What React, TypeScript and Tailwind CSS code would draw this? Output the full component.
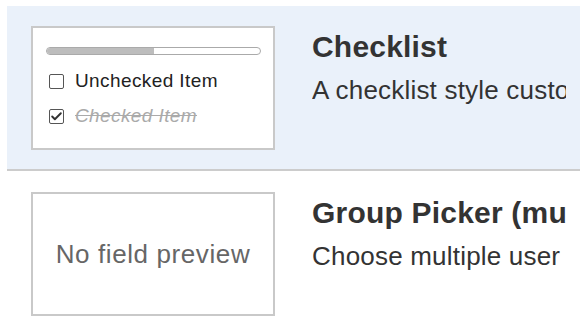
import { Check } from 'lucide-react';

const font = { fontFamily: '"Liberation Sans", Arial, sans-serif' };

function Box({ checked }: { checked?: boolean }) {
  return (
    <span className="ml-[3px] w-[15px] h-[15px] shrink-0 border border-[#555] rounded-[2px] bg-white flex items-center justify-center">
      {checked && <Check size={13} strokeWidth={3.5} className="text-[#333]" />}
    </span>
  );
}

function ChecklistPreview() {
  return (
    <div className="w-[244px] h-[124px] shrink-0 border-2 border-[#c9c9c9] bg-white pt-[19px] pl-[13px] pr-[12px]">
      <div className="h-[8px] rounded-full border border-[#aaa] bg-white overflow-hidden">
        <div className="h-full w-1/2 bg-[#bdbdbd]" />
      </div>
      <div className="mt-[14px] flex flex-col gap-[11px]">
        <div className="flex items-center gap-[11px] text-[19px] leading-[24px] tracking-[0.4px] text-[#222]">
          <Box />
          <span>Unchecked Item</span>
        </div>
        <div className="flex items-center gap-[11px] text-[19px] leading-[24px] tracking-[0.4px] text-[#aaa] italic line-through">
          <Box checked />
          <span>Checked Item</span>
        </div>
      </div>
    </div>
  );
}

function EmptyPreview() {
  return (
    <div className="w-[244px] h-[124px] shrink-0 border-2 border-[#c9c9c9] bg-white flex items-center justify-center text-[26px] tracking-[0.6px] text-[#666]">
      No field preview
    </div>
  );
}

function Row({ title, desc, active, preview }: { title: string; desc: string; active?: boolean; preview: React.ReactNode }) {
  return (
    <div className={`flex gap-[37px] pl-[24px] whitespace-nowrap ${active ? 'bg-[#eaf1fa] pt-[20px] pb-[19px] border-b-2 border-[#cccccc]' : 'pt-[21px] pb-[20px]'}`}>
      {preview}
      <div className="w-[254px] overflow-hidden pt-[4px] text-[#333]">
        <div className="text-[30px] leading-[34px] font-bold tracking-[0.2px]">{title}</div>
        <div className="mt-[11px] text-[26px] leading-[30px] tracking-[0.2px]">{desc}</div>
      </div>
    </div>
  );
}

export default function App() {
  return (
    <div className="w-[580px] h-[330px] bg-white overflow-hidden pl-[7px] pt-[6px]" style={font}>
      <div className="w-[700px]">
        <Row
          active
          title="Checklist"
          desc="A checklist style custom field"
          preview={<ChecklistPreview />}
        />
        <Row
          title="Group Picker (multiple groups)"
          desc="Choose multiple user groups"
          preview={<EmptyPreview />}
        />
      </div>
    </div>
  );
}
